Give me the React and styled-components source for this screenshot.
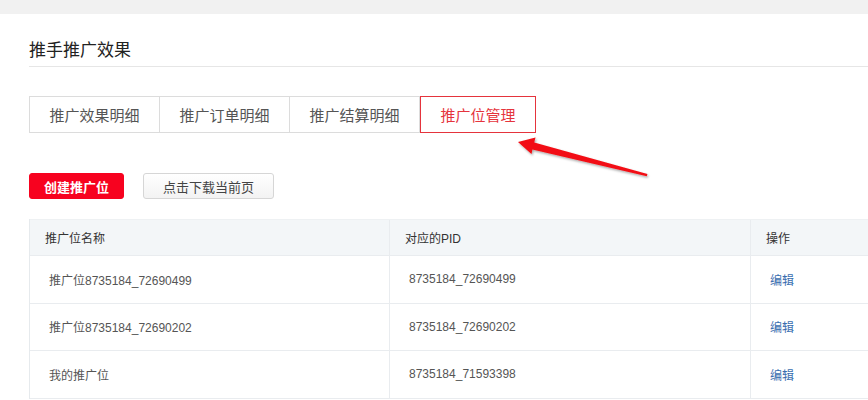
import React from 'react'
import styled, { createGlobalStyle } from 'styled-components'

const GlobalStyle = createGlobalStyle`
  html, body {
    margin: 0;
    padding: 0;
    background: #fff;
    overflow: hidden;
  }
  body {
    font-family: "Liberation Sans", "Noto Sans CJK SC", sans-serif;
  }
  * {
    box-sizing: border-box;
  }
`

const Page = styled.div`
  position: relative;
  width: 868px;
  height: 400px;
  overflow: hidden;
`

const TopBar = styled.div`
  height: 14px;
  background-color: #f1f1f1;
`

const Main = styled.div`
  padding-left: 29px;
`

const Title = styled.h2`
  margin: 26px 0 0;
  padding-bottom: 4px;
  font-size: 17px;
  line-height: 22px;
  font-weight: normal;
  color: #222;
  border-bottom: 1px solid #e6e6e6;
`

const Tabs = styled.div`
  display: flex;
  margin-top: 29px;
`

const Tab = styled.div`
  height: 37px;
  padding: 0 19.5px;
  display: flex;
  align-items: center;
  font-size: 15px;
  color: ${({ active }) => (active ? '#e5343d' : '#555')};
  border: 1px solid ${({ active }) => (active ? '#e5343d' : '#dcdcdc')};
  border-left-width: ${({ active }) => (active ? '1px' : '0')};

  &:first-child {
    border-left-width: 1px;
  }
`

const Actions = styled.div`
  display: flex;
  gap: 19px;
  margin-top: 40px;
`

const Button = styled.button`
  height: 26px;
  padding: 0 ${({ primary }) => (primary ? '14px' : '19px')};
  border-radius: 3px;
  font-family: inherit;
  font-size: 13px;
  font-weight: ${({ primary }) => (primary ? 'bold' : 'normal')};
  color: ${({ primary }) => (primary ? '#fff' : '#444')};
  background: ${({ primary }) =>
    primary ? '#f7021f' : 'linear-gradient(#fff, #f3f3f3)'};
  border: 1px solid ${({ primary }) => (primary ? '#f7021f' : '#d6d6d6')};
  cursor: pointer;
`

const Table = styled.div`
  margin-top: 20px;
  width: 900px;
  border-left: 1px solid #e6eaed;
`

const Row = styled.div`
  display: grid;
  grid-template-columns: 359px 361px 1fr;
  height: ${({ head }) => (head ? '37px' : '47.5px')};
  background-color: ${({ head }) => (head ? '#f3f6f8' : '#fff')};
  border-bottom: 1px solid #e9ecef;
  border-top: ${({ head }) => (head ? '1px solid #eef1f3' : 'none')};
`

const Cell = styled.div`
  display: flex;
  align-items: center;
  padding-left: ${({ head }) => (head ? '15px' : '19px')};
  font-size: 12px;
  color: ${({ head }) => (head ? '#333' : '#555')};
  border-left: 1px solid #e9ecef;

  &:first-child {
    border-left: none;
  }
`

const EditLink = styled.a`
  color: #3a6eaf;
  font-size: 12px;
  text-decoration: none;
  cursor: pointer;
`

const ArrowLayer = styled.svg`
  position: absolute;
  left: 0;
  top: 0;
  pointer-events: none;
`

const rows = [
  { name: '推广位8735184_72690499', pid: '8735184_72690499' },
  { name: '推广位8735184_72690202', pid: '8735184_72690202' },
  { name: '我的推广位', pid: '8735184_71593398' },
]

const tabs = ['推广效果明细', '推广订单明细', '推广结算明细', '推广位管理']

export default function App() {
  return (
    <Page>
      <GlobalStyle />
      <TopBar />
      <Main>
        <Title>推手推广效果</Title>
        <Tabs>
          {tabs.map((t, i) => (
            <Tab key={t} active={i === 3}>{t}</Tab>
          ))}
        </Tabs>
        <Actions>
          <Button primary>创建推广位</Button>
          <Button>点击下载当前页</Button>
        </Actions>
        <Table>
          <Row head>
            <Cell head>推广位名称</Cell>
            <Cell head>对应的PID</Cell>
            <Cell head>操作</Cell>
          </Row>
          {rows.map((r) => (
            <Row key={r.pid}>
              <Cell>{r.name}</Cell>
              <Cell>{r.pid}</Cell>
              <Cell><EditLink>编辑</EditLink></Cell>
            </Row>
          ))}
        </Table>
      </Main>
      <ArrowLayer width="868" height="400" viewBox="0 0 868 400">
        <defs>
          <filter id="shadow" x="-10%" y="-50%" width="120%" height="200%">
            <feDropShadow dx="1" dy="1.5" stdDeviation="1.2" floodColor="#000" floodOpacity="0.35" />
          </filter>
        </defs>
        <polygon
          points="518,142 535.5,137.5 534.2,142.6 647.4,174 646.8,176.2 532.4,149.4 531.5,154"
          fill="#f20c12"
          filter="url(#shadow)"
        />
      </ArrowLayer>
    </Page>
  )
}
